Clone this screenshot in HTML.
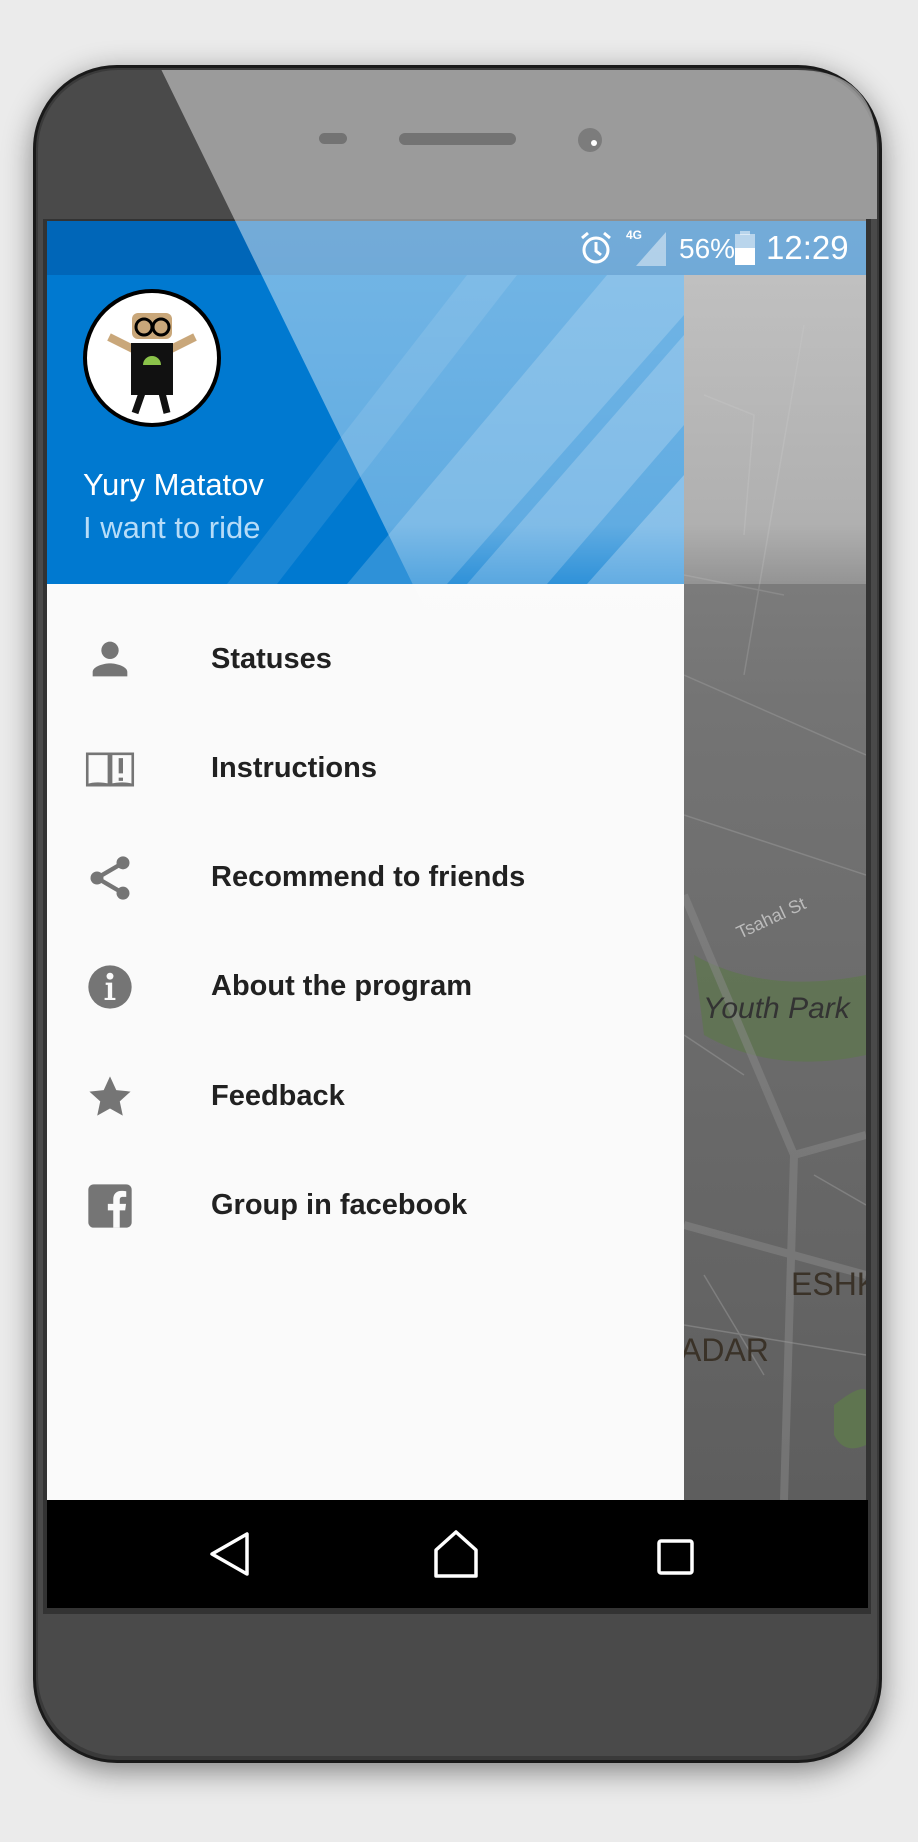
<!DOCTYPE html>
<html><head><meta charset="utf-8"><style>
*{margin:0;padding:0;box-sizing:border-box}
body{width:918px;height:1842px;background:#ebebeb;position:relative;overflow:hidden;font-family:"Liberation Sans",sans-serif}
.abs{position:absolute}
.item{position:absolute;left:211px;font-size:29px;font-weight:bold;color:#212121;line-height:1}
.ic{position:absolute;left:84px;width:52px;height:52px}
</style></head><body>
<div class="abs" style="left:33px;top:65px;width:849px;height:1698px;border-radius:84px;background:#3a3a3a;box-shadow:0 8px 30px rgba(0,0,0,.45);border:3px solid #1a1a1a"></div>
<div class="abs" style="left:38px;top:70px;width:839px;height:1686px;border-radius:80px;background:#4a4a4a"></div>
<div class="abs" style="left:43px;top:219px;width:828px;height:1395px;background:#333"></div>
<svg class="abs" style="left:684px;top:275px" width="182" height="1225" viewBox="0 0 182 1225">
<defs><linearGradient id="mg" x1="0" y1="0" x2="0" y2="1"><stop offset="0" stop-color="#8e8e8e"/><stop offset=".35" stop-color="#747474"/><stop offset="1" stop-color="#5e5e5e"/></linearGradient></defs>
<rect width="182" height="1225" fill="url(#mg)"/>
<path d="M10 680 Q80 720 182 700 L182 780 Q90 800 20 760Z" fill="#5f7550" opacity=".8"/>
<path d="M150 1130 Q175 1110 182 1115 L182 1170 Q160 1180 150 1160Z" fill="#5f7550"/>
<path d="M0 620 L110 880 L100 1225 M110 880 L182 860 M0 950 L182 1000" stroke="#8a8a8a" stroke-width="8" fill="none" opacity=".5"/>
<path d="M20 120 L70 140 L60 260 M0 300 L100 320 M120 50 L60 400 M0 400 L182 480 M0 540 L182 600 M0 760 L60 800 M130 900 L182 930 M20 1000 L80 1100 M0 1050 L182 1080" stroke="#999" stroke-width="1.5" fill="none" opacity=".5"/>
<text x="56" y="664" font-size="18" fill="#bbb" transform="rotate(-25 56 664)" font-family="Liberation Sans">Tsahal St</text>
<text x="19" y="743" font-size="30" fill="#333" font-style="italic" font-family="Liberation Sans">Youth Park</text>
<text x="107" y="1020" font-size="32" fill="#3a3228" font-family="Liberation Sans">ESHK</text>
<text x="-4" y="1086" font-size="32" fill="#3a3228" font-family="Liberation Sans">ADAR</text>
</svg>
<div class="abs" style="left:47px;top:221px;width:819px;height:54px;background:#0066b8"></div>
<div class="abs" style="left:47px;top:275px;width:637px;height:309px;background:#0079d0;overflow:hidden">
<svg width="637" height="309" style="position:absolute;left:0;top:0">
<polygon points="300,309 560,0 637,0 637,40 400,309" fill="#fff" opacity=".18"/>
<polygon points="420,309 637,60 637,150 500,309" fill="#fff" opacity=".2"/>
<polygon points="540,309 637,200 637,309" fill="#fff" opacity=".25"/>
<polygon points="180,309 420,0 470,0 230,309" fill="#fff" opacity=".1"/>
</svg>
<div class="abs" style="left:36px;top:14px;width:138px;height:138px;border-radius:50%;background:#fff;border:4px solid #000;overflow:hidden">
<svg width="130" height="130" viewBox="0 0 130 130"><path d="M22 44 L50 58 M108 44 L80 58" stroke="#c9a77a" stroke-width="8"/><rect x="45" y="20" width="40" height="26" rx="6" fill="#c9a77a"/><circle cx="57" cy="34" r="8" fill="none" stroke="#000" stroke-width="3"/><circle cx="74" cy="34" r="8" fill="none" stroke="#000" stroke-width="3"/><rect x="44" y="50" width="42" height="52" fill="#111"/><path d="M56 72 a9 9 0 0 1 18 0Z" fill="#8bc34a"/><path d="M55 100 L48 120 M75 100 L80 120" stroke="#111" stroke-width="7"/></svg>
</div>
<div class="abs" style="left:36px;top:192px;color:#fff;font-size:31px">Yury Matatov</div>
<div class="abs" style="left:36px;top:235px;color:#b6dcf8;font-size:31px">I want to ride</div>
</div>
<svg class="abs" style="left:578px;top:230px" width="36" height="36" viewBox="0 0 36 36"><circle cx="18" cy="20" r="12" fill="none" stroke="#fff" stroke-width="3"/><path d="M18 12 V21 L23 25 M4 8 L10 3 M32 8 L26 3" stroke="#fff" stroke-width="3" fill="none"/></svg>
<div class="abs" style="left:626px;top:228px;color:#fff;font-size:12px;font-weight:bold">4G</div>
<svg class="abs" style="left:636px;top:232px" width="32" height="34"><polygon points="0,34 30,0 30,34" fill="#fff" opacity=".45"/></svg>
<div class="abs" style="left:679px;top:233px;color:#fff;font-size:28px">56%</div>
<svg class="abs" style="left:735px;top:231px" width="20" height="34"><rect x="5" y="0" width="10" height="4" fill="#fff" opacity=".5"/><rect x="0" y="3" width="20" height="14" fill="#fff" opacity=".5"/><rect x="0" y="17" width="20" height="17" fill="#fff"/></svg>
<div class="abs" style="left:766px;top:229px;color:#fff;font-size:33px">12:29</div>
<div class="abs" style="left:47px;top:584px;width:637px;height:916px;background:#fafafa"></div>
<svg class="ic" style="top:633px" viewBox="0 0 24 24" fill="#757575"><circle cx="12" cy="8" r="4"/><path d="M4 20 v-2 c0-2.7 5.3-4 8-4 s8 1.3 8 4 v2z"/></svg>
<svg class="ic" style="top:743px" viewBox="0 0 24 24" fill="none" stroke="#757575" stroke-width="1.2"><path d="M1.5 5 H11.5 V19.5 H1.5Z M12.5 5 H22.5 V19.5 H12.5Z M1.5 19.5 Q6 18 12 19.5 Q18 18 22.5 19.5"/><path d="M17 7 V14 M17 16 V17.5" stroke-width="2"/></svg>
<svg class="ic" style="top:852px" viewBox="0 0 24 24" fill="#757575"><circle cx="18" cy="5" r="3"/><circle cx="6" cy="12" r="3"/><circle cx="18" cy="19" r="3"/><path d="M6 12 L18 5 M6 12 L18 19" stroke="#757575" stroke-width="2"/></svg>
<svg class="ic" style="top:961px" viewBox="0 0 24 24"><circle cx="12" cy="12" r="10" fill="#757575"/><circle cx="12" cy="7" r="1.6" fill="#fafafa"/><path d="M10 10 H13 V17 H14.5 V18 H9.5 V17 H11 V11 H10Z" fill="#fafafa"/></svg>
<svg class="ic" style="top:1071px" viewBox="0 0 24 24" fill="#757575"><path d="M12 2.5 l2.9 6.3 6.6.7-5 4.5 1.4 6.6L12 17.3l-5.9 3.3 1.4-6.6-5-4.5 6.6-.7z"/></svg>
<svg class="ic" style="top:1180px" viewBox="0 0 24 24"><rect x="2" y="2" width="20" height="20" rx="2.5" fill="#757575"/><path d="M16.5 22 V14 H19 L19.4 11 H16.5 V9.3 C16.5 8.4 16.8 7.8 18 7.8 H19.5 V5.2 C19 5.1 18.2 5 17.3 5 C15 5 13.5 6.4 13.5 8.9 V11 H11 V14 H13.5 V22Z" fill="#fafafa"/></svg>
<div class="item" style="top:645px">Statuses</div>
<div class="item" style="top:754px">Instructions</div>
<div class="item" style="top:863px">Recommend to friends</div>
<div class="item" style="top:972px">About the program</div>
<div class="item" style="top:1082px">Feedback</div>
<div class="item" style="top:1191px">Group in facebook</div>
<div class="abs" style="left:47px;top:1500px;width:821px;height:108px;background:#000"></div>
<svg class="abs" style="left:205px;top:1530px" width="50" height="50" viewBox="0 0 50 50"><path d="M42 4 V44 L7 24Z" fill="none" stroke="#fff" stroke-width="3.5" stroke-linejoin="round"/></svg>
<svg class="abs" style="left:432px;top:1530px" width="50" height="50" viewBox="0 0 50 50"><path d="M4 46 V20 L24 2 L44 20 V46Z" fill="none" stroke="#fff" stroke-width="3.5" stroke-linejoin="round"/></svg>
<svg class="abs" style="left:656px;top:1538px" width="40" height="40"><rect x="3" y="3" width="33" height="32" rx="2" fill="none" stroke="#fff" stroke-width="3.5"/></svg>
<div class="abs" style="left:319px;top:133px;width:28px;height:11px;border-radius:6px;background:#000"></div>
<div class="abs" style="left:399px;top:133px;width:117px;height:12px;border-radius:6px;background:#000"></div>
<div class="abs" style="left:578px;top:128px;width:24px;height:24px;border-radius:50%;background:#111"></div>
<div class="abs" style="left:591px;top:140px;width:6px;height:6px;border-radius:50%;background:#fff"></div>
<svg class="abs" style="left:0;top:0" width="918" height="700">
<defs><linearGradient id="gl" x1="0" y1="0" x2="0" y2="1"><stop offset="0" stop-color="#fff" stop-opacity=".45"/><stop offset=".3" stop-color="#fff" stop-opacity=".45"/><stop offset=".8" stop-color="#fff" stop-opacity=".38"/><stop offset="1" stop-color="#fff" stop-opacity="0"/></linearGradient>
<clipPath id="pc"><path d="M38 150 Q38 70 118 70 H797 Q877 70 877 150 V219 H866 V700 H38Z"/></clipPath></defs>
<polygon clip-path="url(#pc)" points="159,65 877,65 877,219 866,219 866,584 684,584 684,620 440,640" fill="url(#gl)"/>
</svg>
</body></html>
